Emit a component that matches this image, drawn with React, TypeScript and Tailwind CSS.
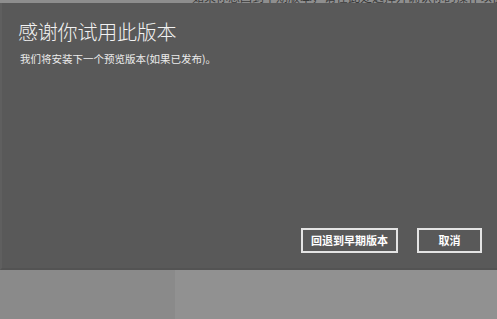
export default function App() {
  const cjk = { fontFamily: '"Noto Sans CJK SC", "Noto Sans", sans-serif' };
  return (
    <div className="w-[497px] h-[319px] flex flex-col overflow-hidden bg-[#8c8c8c]" style={cjk}>
      {/* window behind, barely visible at the top */}
      <div className="h-[3px] bg-[#8e8e8e] overflow-hidden pl-[192px]">
        <p className="-mt-[10px] text-[12px] leading-[14px] text-[#3a3a3a] whitespace-nowrap">
          如果你想回到早期版本，请在此处选择并确认你的操作以便继续
        </p>
      </div>

      {/* dialog */}
      <div className="h-[267px] bg-[#595959] border-l-2 border-[#5f5f5f] border-b-2 border-b-[#535353] flex flex-col pl-[16px] pr-[15px]">
        <h1 className="mt-[16px] text-[20px] leading-[26px] font-light text-[#f2f2f2] tracking-[-0.2px]">
          感谢你试用此版本
        </h1>
        <p className="mt-[7px] pl-[2px] text-[10.5px] leading-[14px] text-[#ececec]">
          我们将安装下一个预览版本(如果已发布)。
        </p>
        <div className="mt-auto mb-[15px] flex justify-end gap-[19px]">
          <button className="w-[97px] h-[25px] border-2 border-[#e4e4e4] text-[11px] font-bold text-white leading-none">
            回退到早期版本
          </button>
          <button className="w-[65px] h-[25px] border-2 border-[#e4e4e4] text-[11px] font-bold text-white leading-none">
            取消
          </button>
        </div>
      </div>

      {/* page behind the dialog */}
      <div className="flex-1 flex">
        <div className="w-[175px] bg-[#8a8a8a]" />
        <div className="flex-1 bg-[#919191]" />
      </div>
    </div>
  );
}
